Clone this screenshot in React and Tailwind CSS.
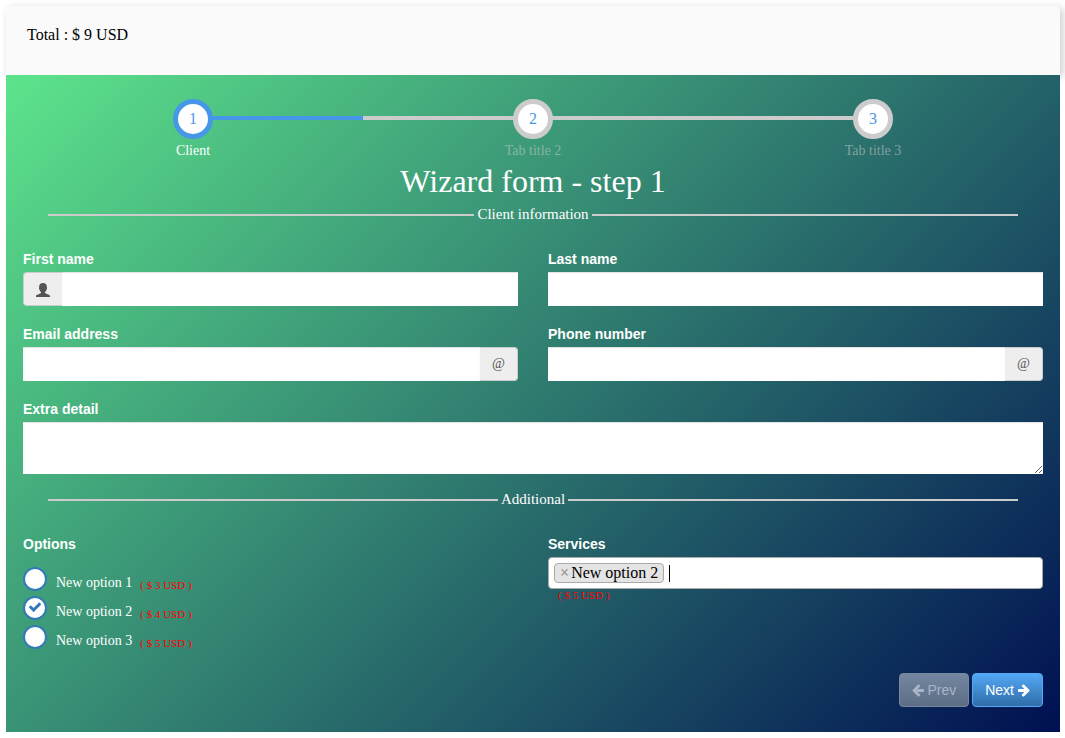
import React, { useState } from "react";

const STEPS = ["Client", "Tab title 2", "Tab title 3"];

const OPTIONS = [
  { id: "opt1", label: "New option 1", price: "( $ 3 USD )" },
  { id: "opt2", label: "New option 2", price: "( $ 4 USD )" },
  { id: "opt3", label: "New option 3", price: "( $ 5 USD )" },
];

function UserIcon() {
  return (
    <svg viewBox="0 0 14 14" className="h-3.5 w-3.5" fill="#555555" aria-hidden="true">
      <path d="M7 0C4.500 0 3.200 1.300 3.200 3.600L3 5.200c0 1 .4 1.200.6 1.700.2 1 .7 1.700 1.400 2.200v1c-.6.500-1.400.7-2.400 1.100C1 11.800 0 12.200 0 12.900V14h14v-1.100c0-.7-1-1.100-2.600-1.700-1-.4-1.800-.6-2.400-1.100v-1c.7-.5 1.200-1.200 1.400-2.200.2-.5.6-.7.6-1.700l-.2-1.600C10.800 1.300 9.500 0 7 0z" />
    </svg>
  );
}

function ArrowIcon({ className = "" }) {
  return (
    <svg viewBox="0 0 1536 1792" className={"h-3.5 w-3 " + className} fill="currentColor" aria-hidden="true">
      <path d="M1536 896v128q0 53-32.500 90.500t-84.500 37.500h-704l293 294q38 36 38 90t-38 90l-75 76q-37 37-90 37-52 0-91-37l-651-652q-37-37-37-90 0-52 37-91l651-650q38-38 91-38 52 0 90 38l75 74q38 38 38 91t-38 91l-293 293h704q52 0 84.500 37.500t32.500 90.500z" />
    </svg>
  );
}

function CheckIcon({ className = "" }) {
  return (
    <svg viewBox="0 0 1792 1792" className={"size-3.5 " + className} fill="currentColor" aria-hidden="true">
      <path d="M1671 566q0 40-28 68l-724 724-136 136q-28 28-68 28t-68-28l-136-136-362-362q-28-28-28-68t28-68l136-136q28-28 68-28t68 28l294 295 656-657q28-28 68-28t68 28l136 136q28 28 28 68z" />
    </svg>
  );
}

function Stepper() {
  return (
    <div className="relative">
      <div className="absolute inset-x-1/6 top-[17px] h-1 bg-[#cccccc]">
        <div className="h-full w-1/4 bg-[#4797e8]" />
      </div>
      <ol className="relative grid grid-cols-3">
        {STEPS.map((title, i) => (
          <li key={title} className="flex flex-col items-center">
            <a
              href={"#step-" + (i + 1)}
              className={
                "flex size-10 items-center justify-center rounded-full border-[5px] bg-white text-base text-[#4797e8] " +
                (i === 0 ? "border-[#4797e8]" : "border-[#cccccc]")
              }
            >
              {i + 1}
            </a>
            <span className={"mt-0.5 text-sm leading-5 " + (i === 0 ? "text-white" : "text-[#cccccc]/55")}>
              {title}
            </span>
          </li>
        ))}
      </ol>
    </div>
  );
}

function SectionTitle({ children }) {
  return (
    <div className="flex items-center gap-[3px] px-[25px]">
      <div className="h-0.5 flex-1 bg-[#cccccc]" />
      <h3 className="pb-0.5 text-[15px] leading-[18px] text-white">{children}</h3>
      <div className="h-0.5 flex-1 bg-[#cccccc]" />
    </div>
  );
}

const labelClass =
  "block font-['Liberation_Sans',Arial,sans-serif] text-sm leading-[26px] font-bold text-white";
const fieldClass =
  "min-w-0 flex-1 bg-white px-3 text-sm text-[#555555] shadow-[inset_0_1px_1px_rgba(0,0,0,0.12)] outline-none";

function Field({ id, label, type = "text", before, after }) {
  return (
    <div>
      <label htmlFor={id} className={labelClass}>
        {label}
      </label>
      <div className="flex h-[34px]">
        {before && (
          <span className="flex w-[39px] items-center justify-center rounded-l border border-r-0 border-[#cccccc] bg-[#eeeeee] pt-0.5">
            {before}
          </span>
        )}
        <input id={id} type={type} className={fieldClass} />
        {after && (
          <span className="flex w-[38px] items-center justify-center rounded-r border border-l-0 border-[#cccccc] bg-[#eeeeee] text-sm text-[#555555]">
            {after}
          </span>
        )}
      </div>
    </div>
  );
}

function Option({ option, checked, onChange }) {
  return (
    <div className="flex h-6 items-center">
      <span className="relative flex size-6">
        <input
          id={option.id}
          type="checkbox"
          checked={checked}
          onChange={onChange}
          className="size-6 appearance-none rounded-full border-2 border-[#337ab7] bg-white"
        />
        {checked && <CheckIcon className="pointer-events-none absolute top-1 left-[5px] text-[#337ab7]" />}
      </span>
      <label htmlFor={option.id} className="flex items-baseline gap-2 pt-2 pl-[9px] text-sm leading-5 text-white">
        {option.label}
        <small className="relative top-0.5 text-[11px] text-[#ff0000]">{option.price}</small>
      </label>
    </div>
  );
}

export default function App() {
  const [selected, setSelected] = useState({ opt2: true });

  return (
    <main className="my-1.5 mr-[5px] ml-1.5 font-['Liberation_Serif','Times_New_Roman',serif]">
      <header className="rounded-t-sm bg-[#fafafa] px-[21px] pt-[17px] pb-7 text-base leading-6 text-black shadow-[3px_2px_8px_rgba(0,0,0,0.2)]">
        Total : $ 9 USD
      </header>

      <form
        onSubmit={(e) => e.preventDefault()}
        className="relative bg-[linear-gradient(135deg,#5de48c,#001052)] px-[17px] pt-6 pb-[25px]"
      >
        <Stepper />
        <h2 className="pb-1 text-center text-[32px] leading-10 text-white">Wizard form - step 1</h2>

        <SectionTitle>Client information</SectionTitle>

        <div className="mt-[21px] grid grid-cols-2 gap-x-[30px] gap-y-[15px]">
          <Field id="first-name" label="First name" before={<UserIcon />} />
          <Field id="last-name" label="Last name" />
          <Field id="email" label="Email address" type="email" after="@" />
          <Field id="phone" label="Phone number" type="tel" after="@" />
          <div className="col-span-2">
            <label htmlFor="extra" className={labelClass}>
              Extra detail
            </label>
            <textarea
              id="extra"
              className="block h-[52px] w-full resize-y bg-white px-3 py-1.5 text-sm text-[#555555] shadow-[inset_0_1px_1px_rgba(0,0,0,0.12)] outline-none"
            />
          </div>
        </div>

        <div className="mt-4">
          <SectionTitle>Additional</SectionTitle>
        </div>

        <div className="mt-[21px] grid grid-cols-2 gap-x-[30px]">
          <fieldset>
            <legend className={labelClass}>Options</legend>
            <div className="flex flex-col gap-[5px] pt-2.5">
              {OPTIONS.map((o) => (
                <Option
                  key={o.id}
                  option={o}
                  checked={!!selected[o.id]}
                  onChange={() => setSelected((s) => ({ ...s, [o.id]: !s[o.id] }))}
                />
              ))}
            </div>
          </fieldset>

          <div>
            <label htmlFor="services" className={labelClass}>
              Services
            </label>
            <div className="flex h-8 items-center rounded border border-[#aaaaaa] bg-white px-[5px] text-base text-black">
              <span className="flex h-5 items-center rounded border border-[#aaaaaa] bg-[#e4e4e4] px-[5px] leading-[18px]">
                <button type="button" aria-label="Remove New option 2" className="mr-0.5 font-bold text-[#999999]">
                  ×
                </button>
                New option 2
              </span>
              <span className="mr-px ml-[5px] h-[17px] w-px bg-black" />
              <input id="services" type="text" className="min-w-0 flex-1 outline-none" />
            </div>
            <small className="block pl-2.5 text-[11px] leading-3 text-[#ff0000]">( $ 5 USD )</small>
          </div>
        </div>

        <div className="mt-6 flex justify-end gap-[3px] font-['Liberation_Sans',Arial,sans-serif] text-sm">
          <button
            type="button"
            disabled
            className="flex h-[34px] items-center gap-[3px] rounded border border-[#77889e] bg-linear-to-b from-[#7587a0] to-[#5c6d86] px-3 text-[#a9b5c6]"
          >
            <ArrowIcon />
            Prev
          </button>
          <button
            type="submit"
            className="flex h-[34px] items-center gap-1 rounded border border-[#54a8f5] bg-linear-to-b from-[#54a8f5] to-[#2f6ea8] px-3 text-white"
          >
            Next
            <ArrowIcon className="-scale-x-100" />
          </button>
        </div>
      </form>
    </main>
  );
}
